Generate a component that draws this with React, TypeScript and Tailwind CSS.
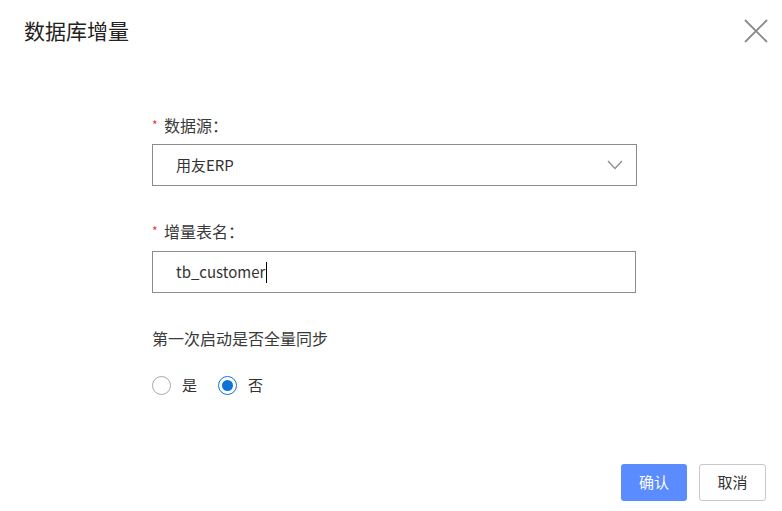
import { useState } from "react"

const font = { fontFamily: '"Noto Sans CJK SC", "Noto Sans", sans-serif' }

function Label({ text, required }: { text: string; required?: boolean }) {
  return (
    <div className="flex h-6 items-center text-[16px] leading-6 text-[#3a3a3a]">
      {required && <span className="mr-[5px] w-[7px] text-[12px] text-[#e4393c]">*</span>}
      <span>{text}</span>
    </div>
  )
}

function Radio({ checked, label, onClick }: { checked: boolean; label: string; onClick: () => void }) {
  return (
    <button type="button" onClick={onClick} className="flex items-center gap-[11px] text-[15px] text-[#333]">
      <span
        className={
          checked
            ? "flex h-[19px] w-[19px] items-center justify-center rounded-full border-[1.5px] border-[#0f72d6] bg-white"
            : "flex h-[19px] w-[19px] items-center justify-center rounded-full border border-[#a8a8a8] bg-white"
        }
      >
        {checked && <span className="h-[11px] w-[11px] rounded-full bg-[#0f72d6]" />}
      </span>
      <span>{label}</span>
    </button>
  )
}

export default function App() {
  const [fullSync, setFullSync] = useState(false)
  const table = "tb_customer"

  return (
    <div className="flex h-[511px] w-[782px] flex-col bg-white" style={font}>
      <div className="flex h-[62px] items-center justify-between pl-6 pr-[12px]">
        <h1 className="text-[21px] font-normal text-[#222]">数据库增量</h1>
        <button type="button" className="flex h-7 w-7 items-center justify-center text-[#8a8a8a]">
          <svg width="24" height="24" viewBox="0 0 24 24" fill="none" stroke="currentColor" strokeWidth="1.8">
            <path d="M1 1L23 23M23 1L1 23" />
          </svg>
        </button>
      </div>

      <div className="flex w-[637px] flex-col pl-[152px]">
        <div className="mt-[51px]">
          <Label text="数据源：" required />
        </div>
        <div className="mt-[7px] flex h-[42px] w-[485px] items-center justify-between border border-[#8c8c8c] pl-[23px] pr-[13px] text-[15px] text-[#333]">
          <span>用友ERP</span>
          <svg width="16" height="10" viewBox="0 0 16 10" fill="none" stroke="#8c8c8c" strokeWidth="1.3">
            <path d="M1 1L8 8.5L15 1" />
          </svg>
        </div>

        <div className="mt-[33px]">
          <Label text="增量表名：" required />
        </div>
        <div className="mt-[8px] flex h-[42px] w-[484px] items-center border border-[#8c8c8c] pl-[23px] text-[15px] text-[#333]">
          <span>{table}</span>
          <span className="ml-px h-[21px] w-px bg-black" />
        </div>

        <div className="mt-[33px]">
          <Label text="第一次启动是否全量同步" />
        </div>
        <div className="mt-[23px] flex h-6 items-center gap-[21px]">
          <Radio checked={fullSync} label="是" onClick={() => setFullSync(true)} />
          <Radio checked={!fullSync} label="否" onClick={() => setFullSync(false)} />
        </div>
      </div>

      <div className="mt-auto mb-[10px] flex justify-end gap-3 pr-4">
        <button type="button" className="h-[37px] w-[66px] rounded-[3px] bg-[#5a8cff] text-[15px] text-white">
          确认
        </button>
        <button type="button" className="h-[37px] w-[67px] rounded-[3px] border border-[#c8c8cc] bg-white text-[15px] text-[#333]">
          取消
        </button>
      </div>
    </div>
  )
}
